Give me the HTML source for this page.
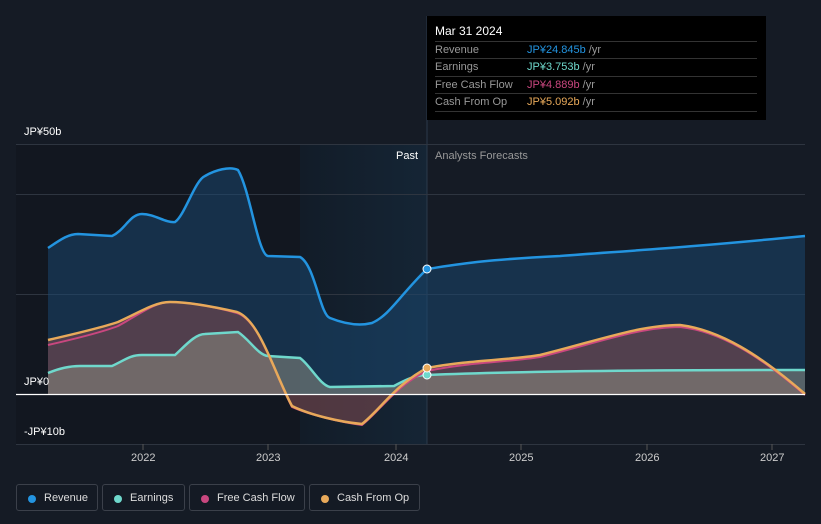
<!DOCTYPE html><html><head><style>
body{margin:0;width:821px;height:524px;background:#151b25;font-family:"Liberation Sans",sans-serif;overflow:hidden;position:relative}
.t{position:absolute;font-size:11px;color:#fff}
.tip{position:absolute;left:427px;top:16px;width:339px;height:104px;background:#000;}
.tip .h{position:absolute;left:8px;top:8px;font-size:12px;color:#fff}
.row{position:absolute;left:8px;width:322px;height:17px;border-top:1px solid #333;font-size:11px;color:#999;line-height:17px}
.row span{position:absolute;left:92px}
.leg{position:absolute;top:484px;height:27px;border:1px solid #3b404a;border-radius:3px;font-size:11px;color:#ddd;line-height:27px;box-sizing:border-box;background:#141a24}
.leg i{position:absolute;left:11px;top:10px;width:8px;height:8px;border-radius:50%}
.leg b{font-weight:normal;position:absolute;left:27px}
</style></head><body>
<svg width="821" height="524" style="position:absolute;left:0;top:0">
<defs><linearGradient id="pg" x1="0" x2="1"><stop offset="0" stop-color="#121c28"/><stop offset="1" stop-color="#152535"/></linearGradient></defs>
<rect x="16" y="144" width="284" height="300" fill="#121720"/>
<rect x="300" y="144" width="127" height="300" fill="url(#pg)"/>
<line x1="427" y1="16" x2="427" y2="444" stroke="#2a3a4c"/>
<g stroke="#2e3540" stroke-width="1"><line x1="16" y1="144.5" x2="805" y2="144.5"/><line x1="16" y1="194.5" x2="805" y2="194.5"/><line x1="16" y1="294.5" x2="805" y2="294.5"/><line x1="16" y1="444.5" x2="805" y2="444.5"/></g>
<path d="M48,248 C60,240 68,234 78,234 L112,236 C125,230 130,214 142,214 C155,214 165,223 175,222 C185,215 195,180 205,176 C215,170 230,166 238,170 C250,190 258,255 268,256 L300,257 C315,265 320,315 330,318 C345,324 360,326 372,323 C390,315 400,295 427,269 C460,264 480,260 560,256 C640,250 680,248 805,236 L805,394 L48,394 Z" fill="#1a4a73" opacity="0.5"/>
<path d="M48,340 C70,335 100,328 118,322 C140,312 155,302 170,302 C190,302 215,307 237,312 C260,320 275,375 292,406 C310,415 340,422 362,424 C380,410 395,385 427,368 C470,360 510,360 540,355 C600,340 640,325 680,325 C720,330 760,355 805,394 L427,394 L48,394 Z" fill="#7a4a50" opacity="0.6"/>
<path d="M48,373 C60,368 70,366 80,366 L112,366 C125,360 130,355 142,355 L175,355 C185,346 195,334 205,334 L238,332 C250,340 258,355 268,356 L300,358 C310,365 320,385 330,387 L394,386 C405,380 415,375 427,375 C500,372 600,370 805,370 L805,394 L48,394 Z" fill="#8a8a80" opacity="0.55"/>
<path d="M48,248 C60,240 68,234 78,234 L112,236 C125,230 130,214 142,214 C155,214 165,223 175,222 C185,215 195,180 205,176 C215,170 230,166 238,170 C250,190 258,255 268,256 L300,257 C315,265 320,315 330,318 C345,324 360,326 372,323 C390,315 400,295 427,269 C460,264 480,260 560,256 C640,250 680,248 805,236" fill="none" stroke="#2394e0" stroke-width="2.5"/>
<path d="M48,373 C60,368 70,366 80,366 L112,366 C125,360 130,355 142,355 L175,355 C185,346 195,334 205,334 L238,332 C250,340 258,355 268,356 L300,358 C310,365 320,385 330,387 L394,386 C405,380 415,375 427,375 C500,372 600,370 805,370" fill="none" stroke="#6fd8cc" stroke-width="2.5"/>
<path d="M48,345 C70,340 100,333 118,326 C140,314 155,302 170,302 C190,302 215,307 237,313 C260,320 275,375 292,407 C310,415 340,422 362,425 C380,411 395,386 427,371 C470,362 510,362 540,357 C600,342 640,327 680,327 C720,331 760,356 805,395" fill="none" stroke="#c9477f" stroke-width="2"/>
<path d="M48,340 C70,335 100,328 118,322 C140,312 155,302 170,302 C190,302 215,307 237,312 C260,320 275,375 292,406 C310,415 340,422 362,424 C380,410 395,385 427,368 C470,360 510,360 540,355 C600,340 640,325 680,325 C720,330 760,355 805,394" fill="none" stroke="#e8a95a" stroke-width="2.5"/>
<line x1="16" y1="394.5" x2="805" y2="394.5" stroke="#fff" stroke-width="1.2"/>
<circle cx="427" cy="269" r="4" fill="#2394e0" stroke="#fff"/>
<circle cx="427" cy="375" r="4" fill="#6fd8cc" stroke="#fff"/>
<circle cx="427" cy="368" r="4" fill="#e8a95a" stroke="#fff"/>
<g stroke="#555"><line x1="143" y1="444" x2="143" y2="450"/><line x1="268" y1="444" x2="268" y2="450"/><line x1="396" y1="444" x2="396" y2="450"/><line x1="521" y1="444" x2="521" y2="450"/><line x1="647" y1="444" x2="647" y2="450"/><line x1="772" y1="444" x2="772" y2="450"/></g>
</svg>
<div class="t" style="left:24px;top:126px">JP¥50b</div>
<div class="t" style="left:24px;top:376px">JP¥0</div>
<div class="t" style="left:24px;top:426px">-JP¥10b</div>
<div class="t" style="left:396px;top:150px">Past</div>
<div class="t" style="left:435px;top:150px;color:#999">Analysts Forecasts</div>
<div class="t" style="left:131px;top:452px;color:#ccc">2022</div>
<div class="t" style="left:256px;top:452px;color:#ccc">2023</div>
<div class="t" style="left:384px;top:452px;color:#ccc">2024</div>
<div class="t" style="left:509px;top:452px;color:#ccc">2025</div>
<div class="t" style="left:635px;top:452px;color:#ccc">2026</div>
<div class="t" style="left:760px;top:452px;color:#ccc">2027</div>
<div class="tip"><div class="h">Mar 31 2024</div>
<div class="row" style="top:25px">Revenue<span style="color:#2394e0">JP¥24.845b <em style="font-style:normal;color:#999">/yr</em></span></div>
<div class="row" style="top:42px">Earnings<span style="color:#6fd8cc">JP¥3.753b <em style="font-style:normal;color:#999">/yr</em></span></div>
<div class="row" style="top:60px">Free Cash Flow<span style="color:#c9477f">JP¥4.889b <em style="font-style:normal;color:#999">/yr</em></span></div>
<div class="row" style="top:77px">Cash From Op<span style="color:#e8a95a">JP¥5.092b <em style="font-style:normal;color:#999">/yr</em></span></div>
<div class="row" style="top:95px;height:0"></div>
</div>
<div class="leg" style="left:16px;width:82px"><i style="background:#2394e0"></i><b>Revenue</b></div>
<div class="leg" style="left:102px;width:83px"><i style="background:#6fd8cc"></i><b>Earnings</b></div>
<div class="leg" style="left:189px;width:116px"><i style="background:#c9477f"></i><b>Free Cash Flow</b></div>
<div class="leg" style="left:309px;width:111px"><i style="background:#e8a95a"></i><b>Cash From Op</b></div>
</body></html>
